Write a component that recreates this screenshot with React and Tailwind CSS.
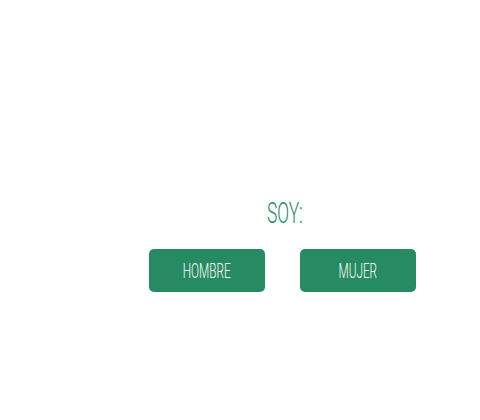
export default function App() {
  return (
    <div className="w-[480px] h-[420px] bg-white font-['Roboto',sans-serif]">
      <div className="ml-[149px] w-[267px] pt-[195px] flex flex-col items-center">
        <h2 className="ml-[4px] text-[29px] leading-[36px] font-light text-[#268a62] scale-x-[0.6] origin-center">
          SOY:
        </h2>
        <div className="mt-[18px] flex gap-[35px]">
          <button className="w-[116px] h-[43px] rounded-[5px] bg-[#268a62] text-white text-[20px] font-light">
            <span className="inline-block scale-x-[0.59]">HOMBRE</span>
          </button>
          <button className="w-[116px] h-[43px] rounded-[5px] bg-[#268a62] text-white text-[20px] font-light">
            <span className="inline-block scale-x-[0.59]">MUJER</span>
          </button>
        </div>
      </div>
    </div>
  );
}
